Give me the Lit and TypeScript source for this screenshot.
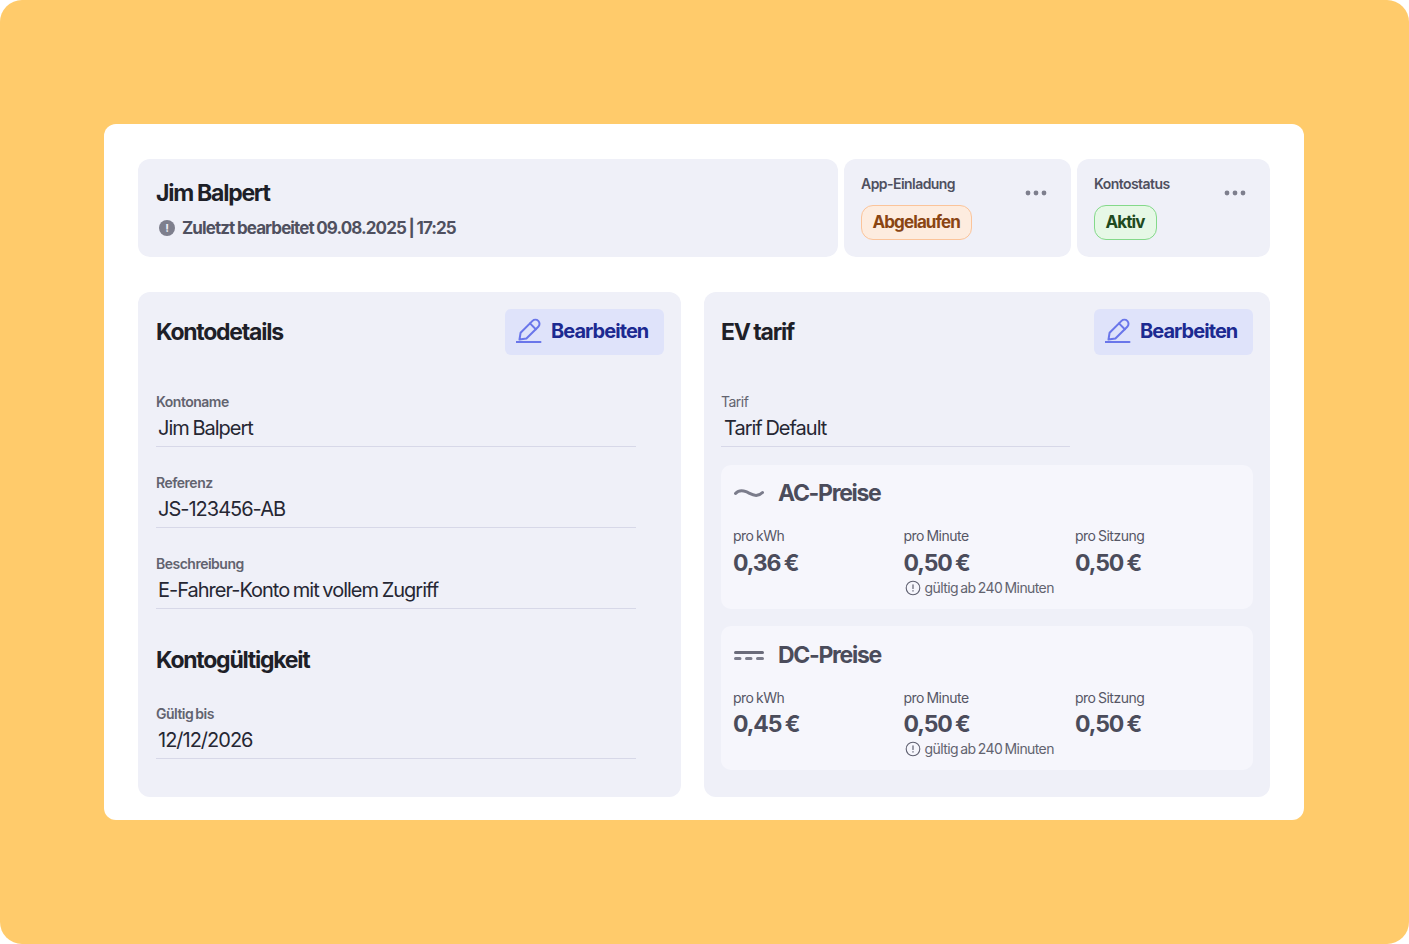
import { LitElement, html, css } from 'lit';
import { customElement } from 'lit/decorators.js';

const pencil = html`<svg class="pencil" width="26" height="26" viewBox="0 0 26 26" fill="none" stroke="#6a76ea" stroke-width="2" stroke-linecap="round" stroke-linejoin="round">
  <path d="M3.500 21.500l1.100-6.800L16.500 2.900a4.100 4.100 0 0 1 5.800 5.800L10.400 20.500z"/>
  <path d="M14 5.400l5.800 5.800"/>
  <path d="M.5 24h24"/>
</svg>`;

const info = html`<svg class="info" width="16" height="16" viewBox="0 0 16 16" fill="none">
  <circle cx="8" cy="8" r="6.800" stroke="#5f6070" stroke-width="1.100"/>
  <path d="M8 4.800v3.700M8 10.600v.5" stroke="#5f6070" stroke-width="1.200" stroke-linecap="round"/>
</svg>`;

const acIcon = html`<svg width="30" height="12" viewBox="0 0 30 12" fill="none">
  <path d="M1.500 6.500C4 3.800 8 3 12 4.700S19.500 9 23 8.300c2.300-.4 4-1.300 5.500-2.800" stroke="#7b7c8b" stroke-width="3" stroke-linecap="round"/>
</svg>`;

const dcIcon = html`<svg width="30" height="12" viewBox="0 0 30 12" fill="none">
  <path d="M1.500 3.500h27" stroke="#6a6b7a" stroke-width="3" stroke-linecap="round"/>
  <path d="M1.500 9.500h4.500M12.500 9.500h4.500M23.500 9.500h5" stroke="#7b7c8b" stroke-width="3" stroke-linecap="round"/>
</svg>`;

const dots = html`<svg class="dots" width="22" height="6" viewBox="0 0 22 6">
  <circle cx="3" cy="3" r="2.400" fill="#7e7f8d"/><circle cx="11" cy="3" r="2.400" fill="#7e7f8d"/><circle cx="19" cy="3" r="2.400" fill="#7e7f8d"/>
</svg>`;

const field = (label: string, value: string, light = false) => html`
  <div class="field">
    <div class="label ${light ? 'light' : ''}">${label}</div>
    <div class="value">${value}</div>
  </div>
`;

const price = (title: string, icon: unknown, kwh: string, cls: string) => html`
  <section class="prices ${cls}">
    <div class="prices-head">${icon}<h3>${title}</h3></div>
    <div class="price-cols">
      <div><div class="price-label">pro kWh</div><div class="amount">${kwh}</div></div>
      <div>
        <div class="price-label">pro Minute</div>
        <div class="amount">0,50 €</div>
        <div class="note">${info}gültig ab 240 Minuten</div>
      </div>
      <div><div class="price-label">pro Sitzung</div><div class="amount">0,50 €</div></div>
    </div>
  </section>
`;

@customElement('app-root')
export class AppRoot extends LitElement {
  static styles = css`
    :host {
      display: block;
      width: 1409px;
      height: 944px;
      background: #fff;
      font-family: Inter, "Liberation Sans", sans-serif;
      color: #1e1f28;
    }
    .stage {
      box-sizing: border-box;
      height: 944px;
      padding: 124px 105px 124px 104px;
      background: #ffcb6b;
      border-radius: 22px;
    }
    .card {
      box-sizing: border-box;
      height: 696px;
      padding: 35px 34px 23px;
      background: #fff;
      border-radius: 12px;
      display: flex;
      flex-direction: column;
      gap: 35px;
    }
    .top {
      display: grid;
      grid-template-columns: 700px 227px 193px;
      gap: 6px;
      height: 98px;
    }
    .panel {
      background: #eff0f8;
      border-radius: 12px;
    }
    .identity {
      box-sizing: border-box;
      padding: 20px 17px 0 18px;
    }
    h1, h2, h3 { margin: 0; }
    h1 {
      font-size: 23px;
      line-height: 28px;
      font-weight: 650;
      letter-spacing: -1.25px;
    }
    .edited {
      display: flex;
      align-items: center;
      gap: 7px;
      margin-top: 9px;
      padding-left: 3px;
      font-size: 17px;
      line-height: 24px;
      font-weight: 650;
      letter-spacing: -0.92px;
      word-spacing: -0.5px;
      color: #4f505f;
    }
    .status {
      position: relative;
      padding: 16px 17px 0;
    }
    .status-title {
      font-size: 14px;
      line-height: 18px;
      font-weight: 600;
      letter-spacing: -0.55px;
      color: #4f505f;
    }
    .dots {
      position: absolute;
      top: 31px;
      right: 24px;
    }
    .pill {
      display: inline-block;
      box-sizing: border-box;
      height: 35px;
      margin-top: 12px;
      padding: 0 11px 0 10.500px;
      border-radius: 12px;
      font-size: 17px;
      line-height: 32px;
      font-weight: 650;
      letter-spacing: -0.9px;
    }
    .pill.expired {
      background: #fdecdf;
      border: 1.500px solid #fbc49a;
      color: #8a4513;
    }
    .pill.active {
      background: #e6f8e6;
      border: 1.500px solid #84d98a;
      color: #1f4a20;
    }
    .bottom {
      flex: 1;
      display: grid;
      grid-template-columns: 543px 566px;
      justify-content: space-between;
    }
    .column {
      box-sizing: border-box;
      padding: 17px;
    }
    .column.left { padding-left: 18px; }
    .column.left .value { padding-left: 2px; }
    .head {
      display: flex;
      align-items: center;
      justify-content: space-between;
      height: 46px;
    }
    h2 {
      font-size: 23px;
      line-height: 30px;
      font-weight: 650;
      letter-spacing: -1.25px;
      word-spacing: -0.5px;
    }
    button {
      display: flex;
      align-items: center;
      gap: 9px;
      box-sizing: border-box;
      width: 159px;
      height: 46px;
      padding: 0 0 2px 11px;
      border: 0;
      border-radius: 6px;
      background: #dfe3fa;
      color: #1c2a91;
      font: 650 20px/26px Inter, "Liberation Sans", sans-serif;
      letter-spacing: -0.95px;
    }
    .fields {
      width: 480px;
      margin-top: 38px;
      display: flex;
      flex-direction: column;
      gap: 27px;
    }
    .field { width: 100%; }
    .label {
      font-size: 14px;
      line-height: 18px;
      font-weight: 600;
      letter-spacing: -0.5px;
      word-spacing: -1px;
      color: #62636f;
    }
    .label.light { font-weight: 400; }
    .value {
      box-sizing: border-box;
      height: 36px;
      padding: 3px 0 0 3px;
      border-bottom: 1.500px solid #d7d8e8;
      font-size: 20px;
      line-height: 28px;
      letter-spacing: -1px;
      word-spacing: -1px;
      color: #262733;
    }
    .validity { margin-top: 36px; }
    .fields.end { margin-top: 30px; }
    .tariff {
      width: 349px;
      margin-top: 38px;
    }
    .prices {
      box-sizing: border-box;
      height: 144px;
      margin-top: 17px;
      padding: 13px 11px 0;
      background: #f6f6fc;
      border-radius: 10px;
    }
    .prices.dc { padding-top: 14px; }
    .prices.dc .amount { margin-top: 2px; }
    .tariff + .prices { margin-top: 18px; }
    .prices-head {
      display: flex;
      align-items: center;
      gap: 14px;
      height: 30px;
      padding-left: 2px;
    }
    h3 {
      font-size: 23px;
      line-height: 30px;
      font-weight: 650;
      letter-spacing: -1.3px;
      color: #4b4c5b;
    }
    .price-cols {
      display: grid;
      grid-template-columns: 170.500px 171.500px 171.500px;
      margin-top: 19px;
      padding-left: 1px;
    }
    .price-label {
      font-size: 14px;
      line-height: 18px;
      letter-spacing: -0.5px;
      word-spacing: -1px;
      color: #565766;
    }
    .amount {
      margin-top: 3px;
      font-size: 23px;
      line-height: 30px;
      font-weight: 650;
      letter-spacing: -1.1px;
      word-spacing: -1px;
      color: #4b4c5b;
    }
    .note {
      display: flex;
      align-items: center;
      gap: 4px;
      padding-left: 1px;
      font-size: 14px;
      line-height: 20px;
      letter-spacing: -0.6px;
      word-spacing: -1px;
      color: #62636f;
    }
    .bullet {
      width: 16px;
      height: 16px;
      border-radius: 50%;
      background: #7e7f8d;
      color: #eff0f8;
      font-size: 11px;
      line-height: 16px;
      font-weight: 700;
      text-align: center;
      letter-spacing: 0;
    }
  `;

  render() {
    return html`
      <div class="stage">
        <div class="card">
          <div class="top">
            <div class="panel identity">
              <h1>Jim Balpert</h1>
              <div class="edited"><span class="bullet">!</span>Zuletzt bearbeitet 09.08.2025 | 17:25</div>
            </div>
            <div class="panel status">
              <div class="status-title">App-Einladung</div>
              ${dots}
              <span class="pill expired">Abgelaufen</span>
            </div>
            <div class="panel status">
              <div class="status-title">Kontostatus</div>
              ${dots}
              <span class="pill active">Aktiv</span>
            </div>
          </div>
          <div class="bottom">
            <div class="panel column left">
              <div class="head"><h2>Kontodetails</h2><button>${pencil}Bearbeiten</button></div>
              <div class="fields">
                ${field('Kontoname', 'Jim Balpert')}
                ${field('Referenz', 'JS-123456-AB')}
                ${field('Beschreibung', 'E-Fahrer-Konto mit vollem Zugriff')}
              </div>
              <h2 class="validity">Kontogültigkeit</h2>
              <div class="fields end">${field('Gültig bis', '12/12/2026')}</div>
            </div>
            <div class="panel column">
              <div class="head"><h2>EV tarif</h2><button>${pencil}Bearbeiten</button></div>
              <div class="tariff">${field('Tarif', 'Tarif Default', true)}</div>
              ${price('AC-Preise', acIcon, '0,36 €', 'ac')}
              ${price('DC-Preise', dcIcon, '0,45 €', 'dc')}
            </div>
          </div>
        </div>
      </div>
    `;
  }
}
